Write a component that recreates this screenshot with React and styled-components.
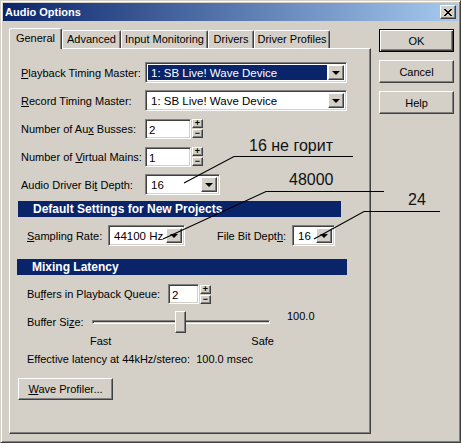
import React from 'react';
import styled, { createGlobalStyle, css } from 'styled-components';

const GlobalStyle = createGlobalStyle`
  html, body {
    margin: 0;
    padding: 0;
    background: #d4d0c8;
  }
  body {
    font-family: "Liberation Sans", Arial, sans-serif;
    font-size: 11px;
    color: #000;
  }
`;

const raised = css`
  border: 1px solid;
  border-color: #fff #404040 #404040 #fff;
  box-shadow: inset -1px -1px #808080, inset 1px 1px #d4d0c8;
  background: #d4d0c8;
`;

const sunken = css`
  border: 1px solid;
  border-color: #808080 #fff #fff #808080;
  box-shadow: inset 1px 1px #404040, inset -1px -1px #d4d0c8;
  background: #fff;
`;

const Window = styled.div`
  position: relative;
  width: 461px;
  height: 443px;
  box-sizing: border-box;
  background: #d4d0c8;
  border: 1px solid;
  border-color: #d4d0c8 #404040 #404040 #d4d0c8;
  box-shadow: inset 1px 1px #fff, inset -1px -1px #808080;
  padding: 2px;
  display: flex;
  flex-direction: column;
`;

const TitleBar = styled.div`
  height: 18px;
  display: flex;
  align-items: center;
  justify-content: space-between;
  padding: 0 2px;
  background: linear-gradient(to right, #0a246a, #a6caf0);
`;

const Title = styled.span`
  color: #fff;
  font-weight: bold;
  font-size: 11px;
`;

const CloseButton = styled.div`
  ${raised};
  width: 16px;
  height: 14px;
  box-sizing: border-box;
  display: flex;
  align-items: center;
  justify-content: center;
`;

const Body = styled.div`
  flex: 1;
  display: flex;
  padding: 8px 0 0 6px;
  gap: 8px;
`;

const TabArea = styled.div`
  display: flex;
  flex-direction: column;
  width: 362px;
`;

const TabStrip = styled.div`
  display: flex;
  align-items: flex-end;
  height: 20px;
  position: relative;
  z-index: 1;
  margin-bottom: -1px;
`;

const Tab = styled.div`
  box-sizing: border-box;
  width: ${p => p.$w}px;
  height: ${p => (p.$active ? '21px' : '18px')};
  padding-top: ${p => (p.$active ? '3px' : '2px')};
  margin: ${p => (p.$active ? '0' : '0 0 1px 0')};
  text-align: center;
  border-top: 1px solid #fff;
  border-left: 1px solid #fff;
  border-right: 1px solid #404040;
  border-radius: 2px 2px 0 0;
  box-shadow: inset -1px 0 #808080;
  background: #d4d0c8;
  white-space: nowrap;
  position: relative;
  z-index: ${p => (p.$active ? 2 : 1)};
`;

const Panel = styled.div`
  box-sizing: border-box;
  height: 386px;
  border: 1px solid;
  border-color: #fff #404040 #404040 #fff;
  box-shadow: inset -1px -1px #808080;
  padding: 13px 10px 0 11px;
  display: flex;
  flex-direction: column;
`;

const FormGrid = styled.div`
  display: grid;
  grid-template-columns: 124px auto;
  grid-auto-rows: 21px;
  row-gap: 7px;
  align-items: center;
`;

const Label = styled.span`
  white-space: ${p => (p.$pre ? 'pre' : 'nowrap')};
  width: ${p => (p.$w ? `${p.$w}px` : 'auto')};
  margin-left: ${p => p.$ml || 0}px;
  flex-shrink: 0;
  & u { text-decoration: underline; }
`;

const Combo = styled.div`
  ${sunken};
  box-sizing: border-box;
  width: ${p => p.$w}px;
  height: 21px;
  display: flex;
  align-items: stretch;
  padding: 2px;
  flex-shrink: 0;
`;

const ComboText = styled.div`
  flex: 1;
  display: flex;
  align-items: center;
  padding-left: 3px;
  margin-right: 1px;
  white-space: nowrap;
  overflow: hidden;
  background: ${p => (p.$selected ? '#0a246a' : 'transparent')};
  color: ${p => (p.$selected ? '#fff' : '#000')};
  font-size: 11.5px;
`;

const DropButton = styled.div`
  ${raised};
  box-sizing: border-box;
  width: 16px;
  display: flex;
  align-items: center;
  justify-content: center;
`;

const Arrow = styled.div`
  width: 0;
  height: 0;
  border-left: 4px solid transparent;
  border-right: 4px solid transparent;
  border-top: 4px solid #000;
  margin-top: 1px;
`;

const SpinField = styled.div`
  display: flex;
  align-items: center;
  gap: 1px;
`;

const TextInput = styled.div`
  ${sunken};
  box-sizing: border-box;
  width: ${p => p.$w}px;
  height: 20px;
  padding: 2px 3px;
  font-size: 11.5px;
  line-height: 16px;
`;

const Spinner = styled.div`
  display: flex;
  flex-direction: column;
  gap: 1px;
`;

const SpinButton = styled.div`
  ${raised};
  box-sizing: border-box;
  width: 11px;
  height: 9px;
  display: flex;
  align-items: center;
  justify-content: center;
  font-size: 9px;
  line-height: 1;
  font-weight: bold;
`;

const SectionHeader = styled.div`
  box-sizing: border-box;
  width: ${p => p.$w}px;
  height: 16px;
  margin: ${p => p.$m};
  padding-left: ${p => p.$pad}px;
  background: #0a246a;
  color: #fff;
  font-weight: bold;
  font-size: 12px;
  display: flex;
  align-items: center;
`;

const Row = styled.div`
  display: flex;
  align-items: center;
  height: ${p => p.$h || 21}px;
  margin-top: ${p => p.$mt || 0}px;
  padding-left: ${p => p.$pl || 0}px;
`;

const SliderRow = styled.div`
  display: flex;
  align-items: flex-start;
  height: 22px;
  margin-top: 7px;
  padding-left: 6px;
`;

const SliderLabel = styled.span`
  width: 65px;
  height: 22px;
  display: flex;
  align-items: center;
  flex-shrink: 0;
`;

const Slider = styled.div`
  position: relative;
  width: 178px;
  height: 22px;
  display: flex;
  align-items: center;
`;

const Track = styled.div`
  width: 100%;
  height: 4px;
  box-sizing: border-box;
  border: 1px solid;
  border-color: #808080 #fff #fff #808080;
  box-shadow: inset 1px 1px #404040;
`;

const Thumb = styled.div`
  ${raised};
  position: absolute;
  top: 0;
  left: ${p => p.$pos}px;
  width: 11px;
  height: 22px;
  box-sizing: border-box;
`;

const SliderValue = styled.span`
  margin-left: 17px;
  margin-top: -1px;
`;

const Scale = styled.div`
  display: flex;
  justify-content: space-between;
  width: 184px;
  margin-left: 69px;
  margin-top: 1px;
  height: 14px;
  align-items: center;
`;

const Info = styled.div`
  padding-left: 6px;
  margin-top: 5px;
  height: 14px;
  white-space: pre;
`;

const Button = styled.div`
  ${raised};
  box-sizing: border-box;
  width: ${p => p.$w || 75}px;
  height: 23px;
  display: flex;
  align-items: center;
  justify-content: center;
  ${p => p.$default && css`
    border-color: #000;
    box-shadow: inset 1px 1px #fff, inset -1px -1px #404040, inset -2px -2px #808080;
  `}
  & u { text-decoration: underline; }
`;

const WaveButton = styled(Button)`
  margin: 11px 0 0 -3px;
  height: 22px;
`;

const ButtonColumn = styled.div`
  display: flex;
  flex-direction: column;
  gap: 8px;
`;

const Overlay = styled.svg`
  position: absolute;
  left: 0;
  top: 0;
  pointer-events: none;
  font-family: "Liberation Sans", Arial, sans-serif;
`;

const ComboBox = ({ w, value, selected }) => (
  <Combo $w={w}>
    <ComboText $selected={selected}>{value}</ComboText>
    <DropButton><Arrow /></DropButton>
  </Combo>
);

const SpinBox = ({ w, value }) => (
  <SpinField>
    <TextInput $w={w}>{value}</TextInput>
    <Spinner>
      <SpinButton>+</SpinButton>
      <SpinButton>−</SpinButton>
    </Spinner>
  </SpinField>
);

const tabs = [
  { name: 'General', w: 53 },
  { name: 'Advanced', w: 59 },
  { name: 'Input Monitoring', w: 87 },
  { name: 'Drivers', w: 46 },
  { name: 'Driver Profiles', w: 76 },
];

const App = () => (
  <>
    <GlobalStyle />
    <Window>
      <TitleBar>
        <Title>Audio Options</Title>
        <CloseButton>
          <svg width="8" height="7" viewBox="0 0 8 7">
            <path d="M0 0 L7 7 M1 0 L8 7 M7 0 L0 7 M8 0 L1 7" stroke="#000" strokeWidth="1" />
          </svg>
        </CloseButton>
      </TitleBar>
      <Body>
        <TabArea>
          <TabStrip>
            {tabs.map((t, i) => (
              <Tab key={t.name} $w={t.w} $active={i === 0}>{t.name}</Tab>
            ))}
          </TabStrip>
          <Panel>
            <FormGrid>
              <Label><u>P</u>layback Timing Master:</Label>
              <ComboBox w={202} value="1: SB Live! Wave Device" selected />
              <Label><u>R</u>ecord Timing Master:</Label>
              <ComboBox w={202} value="1: SB Live! Wave Device" />
              <Label>Number of Au<u>x</u> Busses:</Label>
              <SpinBox w={46} value="2" />
              <Label>Number of <u>V</u>irtual Mains:</Label>
              <SpinBox w={46} value="1" />
              <Label>Audio Driver Bi<u>t</u> Depth:</Label>
              <ComboBox w={75} value="16" />
            </FormGrid>

            <SectionHeader $w={323} $m="6px 0 0 -3px" $pad={15}>
              Default Settings for New Projects
            </SectionHeader>
            <Row $mt={8} $pl={6}>
              <Label $w={81}><u>S</u>ampling Rate:</Label>
              <ComboBox w={77} value="44100 Hz" />
              <Label $w={75} $ml={32}>File Bit Dept<u>h</u>:</Label>
              <ComboBox w={43} value="16" />
            </Row>

            <SectionHeader $w={330} $m="13px 0 0 -4px" $pad={15}>
              Mixing Latency
            </SectionHeader>
            <Row $mt={9} $pl={6} $h={20}>
              <Label $w={141}>Bu<u>f</u>fers in Playback Queue:</Label>
              <SpinBox w={31} value="2" />
            </Row>
            <SliderRow>
              <SliderLabel>Buffer Si<u>z</u>e:</SliderLabel>
              <Slider>
                <Track />
                <Thumb $pos={83} />
              </Slider>
              <SliderValue>100.0</SliderValue>
            </SliderRow>
            <Scale>
              <span>Fast</span>
              <span>Safe</span>
            </Scale>
            <Info>Effective latency at 44kHz/stereo:  100.0 msec</Info>
            <WaveButton $w={95}><span><u>W</u>ave Profiler...</span></WaveButton>
          </Panel>
        </TabArea>
        <ButtonColumn>
          <Button $default>OK</Button>
          <Button>Cancel</Button>
          <Button>Help</Button>
        </ButtonColumn>
      </Body>
      <Overlay width="461" height="443" viewBox="0 0 461 443">
        <g stroke="#000" strokeWidth="1.1" fill="none">
          <polyline points="183,182 233,155.5 352,155.5" />
          <polyline points="162,238 265,190.5 383,190.5" />
          <polyline points="313,238 363,210.5 439,210.5" />
        </g>
        <g fill="#111" fontSize="16">
          <text x="248" y="150">16 не горит</text>
          <text x="288" y="184">48000</text>
          <text x="407" y="204">24</text>
        </g>
      </Overlay>
    </Window>
  </>
);

export default App;
